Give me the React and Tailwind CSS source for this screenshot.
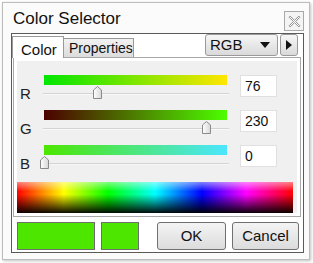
import React from "react";

const font = { fontFamily: '"Liberation Sans", Arial, sans-serif' };

function Thumb({ left }) {
  return (
    <svg
      className="absolute top-[-7px]"
      style={{ left: left }}
      width="9"
      height="13"
      viewBox="0 0 9 13"
    >
      <defs>
        <linearGradient id="tg" x1="0" y1="0" x2="1" y2="0">
          <stop offset="0" stopColor="#ffffff" />
          <stop offset="1" stopColor="#d8d8d8" />
        </linearGradient>
      </defs>
      <path d="M0.5 12.5 V4 L4.5 0.5 L8.5 4 V12.5 Z" fill="url(#tg)" stroke="#8a8a8a" />
    </svg>
  );
}

function Row({ label, grad, thumb, value }) {
  return (
    <div className="flex items-start h-[36px]">
      <div className="w-[26px] pt-[10px] pl-[3px] text-[15px] text-[#222] leading-[18px]">{label}</div>
      <div className="w-[184px] flex flex-col">
        <div className="h-[10px] w-[183px] ml-[1px]" style={{ background: grad }} />
        <div className="relative h-[2px] mt-[8px] w-[186px] bg-[#d4d4d4] border-b border-[#f8f8f8]">
          <Thumb left={thumb} />
        </div>
      </div>
      <div className="ml-[13px] w-[37px] h-[22px] bg-white border border-[#e0e0e0] text-[14px] leading-[18px] pl-[4px] pt-[1px] text-[#111]">
        {value}
      </div>
    </div>
  );
}

export default function App() {
  return (
    <div className="w-[313px] h-[263px] bg-white pt-[2px] pl-[2px]" style={font}>
      <div className="w-[308px] h-[258px] border border-[#bdbdbd] bg-[#fbfbfb] shadow-[1px_1px_3px_rgba(0,0,0,0.25)] flex flex-col">
        <div className="h-[30px] flex items-center justify-between pl-[10px] pr-[5px]">
          <span className="text-[17px] text-[#111] mt-[1px]">Color Selector</span>
          <div className="w-[20px] h-[20px] border border-[#a8a8a8] bg-[#f4f4f4] flex items-center justify-center mt-[6px]">
            <svg width="13" height="13" viewBox="0 0 12 12">
              <path
                d="M1 2 L2 1 L6 5 L10 1 L11 2 L7 6 L11 10 L10 11 L6 7 L2 11 L1 10 L5 6 Z"
                fill="#fff"
                stroke="#8c8c8c"
                strokeWidth="0.9"
              />
            </svg>
          </div>
        </div>
        <div className="ml-[8px] w-[293px] h-[220px] border border-[#5a5a5a] bg-white flex flex-col">
          <div className="flex items-end h-[23px] pl-[0px] relative">
            <div className="w-[52px] h-[22px] bg-white border border-b-0 border-[#9a9a9a] text-[15px] text-[#111] pl-[8px] pt-[2px] relative z-10 mb-[-1px]">
              Color
            </div>
            <div className="w-[70px] h-[19px] bg-gradient-to-b from-[#f2f2f2] to-[#dcdcdc] border border-b-0 border-l-0 border-[#9a9a9a] text-[14px] text-[#111] pl-[5px] leading-[18px]">
              Properties
            </div>
            <div className="ml-[71px] mb-[1px] w-[73px] h-[22px] rounded-[3px] border border-[#9a9a9a] bg-gradient-to-b from-[#f6f6f6] to-[#dadada] flex items-center justify-between pl-[4px] pr-[7px] text-[15px] text-[#111]">
              <span>RGB</span>
              <svg width="10" height="6" viewBox="0 0 10 6">
                <path d="M0 0 H10 L5 6 Z" fill="#111" />
              </svg>
            </div>
            <div className="ml-[2px] mb-[1px] w-[18px] h-[22px] rounded-[3px] border border-[#9a9a9a] bg-gradient-to-b from-[#f6f6f6] to-[#dadada] flex items-center justify-center">
              <svg width="6" height="10" viewBox="0 0 6 10">
                <path d="M0 0 V10 L6 5 Z" fill="#111" />
              </svg>
            </div>
          </div>
          <div className="ml-[1px] w-[288px] h-[160px] border border-[#a8a8a8] bg-white p-[3px]">
            <div className="w-full h-full bg-[#f0f0f0] pt-[14px] pl-[0px] flex flex-col">
              <Row
                label="R"
                grad="linear-gradient(to right, #00e600, #ffe600)"
                thumb={50}
                value="76"
              />
              <Row
                label="G"
                grad="linear-gradient(to right, #4c0000, #4cff00)"
                thumb={159}
                value="230"
              />
              <Row
                label="B"
                grad="linear-gradient(to right, #4ce600, #4ce6ff)"
                thumb={-3}
                value="0"
              />
              <div
                className="mt-[2px] w-[276px] h-[32px] relative"
                style={{
                  background:
                    "linear-gradient(to right, #ff0000, #ffff00 17%, #00ff00 33%, #00ffff 50%, #0000ff 67%, #ff00ff 83%, #ff0000)",
                }}
              >
                <div
                  className="absolute inset-0"
                  style={{
                    background:
                      "linear-gradient(to bottom, rgba(255,255,255,0.5) 0%, rgba(255,255,255,0) 30%, rgba(0,0,0,0) 40%, rgba(0,0,0,0.95) 100%)",
                  }}
                />
              </div>
            </div>
          </div>
          <div className="flex items-center pl-[5px] pt-[5px]">
            <div className="w-[78px] h-[28px] bg-[#4ce600] border border-[#6f6f6f]" />
            <div className="ml-[6px] w-[38px] h-[28px] bg-[#4ce600] border border-[#6f6f6f]" />
            <div className="ml-[18px] w-[69px] h-[28px] rounded-[3px] border border-[#707070] bg-gradient-to-b from-[#f4f4f4] to-[#dcdcdc] flex items-center justify-center text-[15px] text-[#111]">
              OK
            </div>
            <div className="ml-[6px] w-[67px] h-[28px] rounded-[3px] border border-[#707070] bg-gradient-to-b from-[#f4f4f4] to-[#dcdcdc] flex items-center justify-center text-[15px] text-[#111]">
              Cancel
            </div>
          </div>
        </div>
      </div>
    </div>
  );
}
